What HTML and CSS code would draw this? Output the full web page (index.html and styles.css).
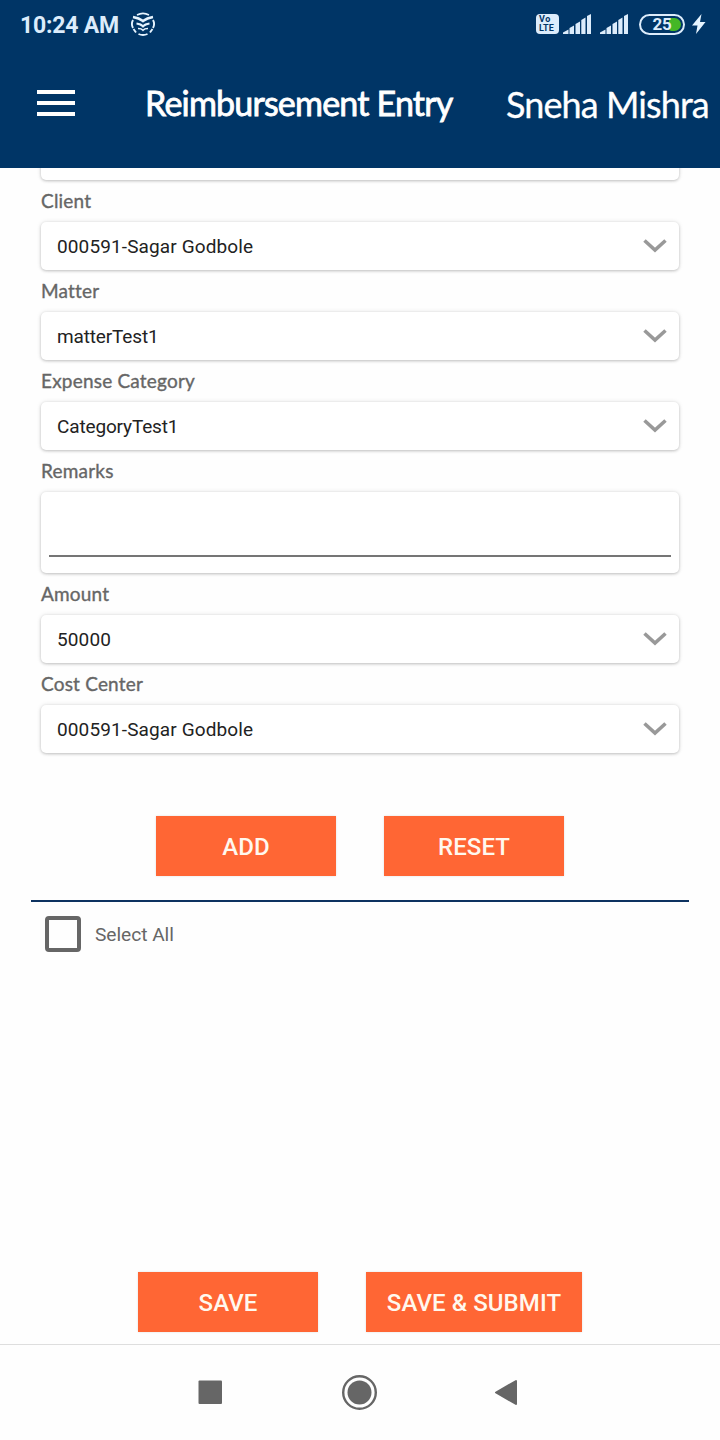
FILE: index.html
```html
<!DOCTYPE html>
<html lang="en">
<head>
<meta charset="utf-8">
<title>Reimbursement Entry</title>
<link rel="stylesheet" href="styles.css">
</head>
<body>
<div class="screen">
  <header class="header">
    <div class="status">
      <span class="clock">10:24 AM</span>
      <svg class="notif" width="26" height="26" viewBox="0 0 26 26" fill="none" stroke="#e6f4ff" stroke-width="1.9">
        <path d="M7 4Q13 .8 19 4" stroke-width="1.600"/>
        <path d="M3 6Q9 7 13 10Q17 7 23 6" stroke-width="2.600"/>
        <path d="M6.500 12.500Q11 13 13 15.500Q15 13 19.500 12.500" stroke-width="2"/>
        <path d="M8 17.500Q11.500 17.500 13 19.200Q14.500 17.500 18 17.500" stroke-width="1.600"/>
        <path d="M3 9Q.8 13 3 17M23 9Q25.200 13 23 17M3.500 18L6 21.500M22.500 18L20 21.500M8.500 23Q13 25 17.500 23"/>
      </svg>
      <div class="status-right">
        <div class="volte"><span class="vo">Vo</span><span>LTE</span></div>
        <svg class="signal" width="28" height="20" viewBox="0 0 28 20" fill="#dcecfb">
          <path d="M0 20V18.500L5.500 15.500V20ZM6.500 20V14L11 11.500V20ZM12.500 20V10L17 7.500V20ZM18.300 20V6L22.500 3.500V20ZM24 20V2L28 0V20Z"/>
        </svg>
        <svg class="signal second" width="28" height="20" viewBox="0 0 28 20" fill="#dcecfb">
          <path d="M0 20V18.500L5.500 15.500V20ZM6.500 20V14L11 11.500V20ZM12.500 20V10L17 7.500V20ZM18.300 20V6L22.500 3.500V20ZM24 20V2L28 0V20Z"/>
        </svg>
        <div class="battery"><span class="charge"></span><span class="level">25</span></div>
        <svg class="bolt" width="14" height="20" viewBox="0 0 14 20" fill="#e6f4ff"><path d="M9.500 0L0 11.500H5.500L4 20L13.500 8H8Z"/></svg>
      </div>
    </div>
    <div class="appbar">
      <div class="menu"><i></i><i></i><i></i></div>
      <h1 class="title">Reimbursement Entry</h1>
      <div class="user">Sneha Mishra</div>
    </div>
  </header>

  <main class="form">
    <div class="box clipped"></div>
    <label class="label">Client</label>
    <div class="box"><span>000591-Sagar Godbole</span><svg class="chev" width="24" height="16" viewBox="0 0 24 16"><path d="M1.500 2.500L12 12L22.500 2.500"/></svg></div>
    <label class="label">Matter</label>
    <div class="box"><span class="tight">matterTest1</span><svg class="chev" width="24" height="16" viewBox="0 0 24 16"><path d="M1.500 2.500L12 12L22.500 2.500"/></svg></div>
    <label class="label">Expense Category</label>
    <div class="box"><span class="tight">CategoryTest1</span><svg class="chev" width="24" height="16" viewBox="0 0 24 16"><path d="M1.500 2.500L12 12L22.500 2.500"/></svg></div>
    <label class="label">Remarks</label>
    <div class="box remarks"><div class="underline"></div></div>
    <label class="label">Amount</label>
    <div class="box"><span>50000</span><svg class="chev" width="24" height="16" viewBox="0 0 24 16"><path d="M1.500 2.500L12 12L22.500 2.500"/></svg></div>
    <label class="label">Cost Center</label>
    <div class="box"><span>000591-Sagar Godbole</span><svg class="chev" width="24" height="16" viewBox="0 0 24 16"><path d="M1.500 2.500L12 12L22.500 2.500"/></svg></div>
  </main>

  <div class="actions">
    <div class="btn">ADD</div>
    <div class="btn">RESET</div>
  </div>
  <div class="rule"></div>
  <div class="select"><div class="check"></div><span>Select All</span></div>

  <div class="actions bottom">
    <div class="btn">SAVE</div>
    <div class="btn wide">SAVE &amp; SUBMIT</div>
  </div>
  <nav class="nav">
    <svg width="24" height="24" viewBox="0 0 24 24" fill="#666"><rect x=".5" y=".5" width="23.500" height="23.500" rx="1"/></svg>
    <svg width="36" height="36" viewBox="0 0 36 36"><circle cx="18.500" cy="18.500" r="16.300" fill="none" stroke="#666" stroke-width="2.400"/><circle cx="18.500" cy="18.500" r="12" fill="#666"/></svg>
    <svg width="24" height="28" viewBox="0 0 24 28" fill="#666" stroke="#666" stroke-width="2" stroke-linejoin="round"><path d="M2 14.500L22 3V26Z"/></svg>
  </nav>
</div>
</body>
</html>
```
FILE: styles.css
```css
* { box-sizing: border-box; }
body { margin: 0; background: #fff; font-family: Roboto, sans-serif; }
.screen { width: 720px; height: 1440px; display: flex; flex-direction: column; overflow: hidden; background: #fefefe; }

.header { height: 168px; flex: none; background: #003566; color: #fff; z-index: 1; }
.status { height: 48px; display: flex; align-items: center; padding: 0 14px 0 20px; }
.clock { font-size: 23px; font-weight: 700; line-height: 28px; color: #dcecfb; letter-spacing: -.2px; padding-top: 3px; }
.notif { margin-left: 11px; }
.status-right { margin-left: auto; display: flex; align-items: center; }
.volte { width: 23px; height: 20px; border-radius: 4px; background: #dcecfb; color: #003566; display: flex; flex-direction: column; padding: 1px 0 0 3px; font: 700 9px/9px Roboto, sans-serif; letter-spacing: .2px; }
.vo { letter-spacing: .6px; }
.signal { margin-left: 4px; }
.signal.second { margin-left: 9px; }
.battery { position: relative; width: 46px; height: 21px; margin-left: 11px; border: 2px solid #dcecfb; border-radius: 11px; display: flex; align-items: center; justify-content: center; }
.charge { position: absolute; right: 2px; top: 2px; width: 12px; height: 13px; border-radius: 3px 7px 7px 3px; background: #45b726; }
.level { position: relative; font-size: 17px; font-weight: 700; line-height: 18px; color: #dcecfb; letter-spacing: -.3px; }
.bolt { margin-left: 7px; }

.appbar { display: flex; align-items: center; height: 110px; padding-left: 37px; }
.menu { display: flex; flex-direction: column; gap: 7px; width: 38px; }
.menu i { height: 4px; background: #fff; }
.title { margin: 0 0 0 70px; width: 361px; font: 400 34px/44px Lato, sans-serif; letter-spacing: -.8px; white-space: nowrap; -webkit-text-stroke: .8px #fff; }
.user { font: 400 36px/44px Lato, sans-serif; letter-spacing: -.9px; white-space: nowrap; -webkit-text-stroke: .3px #fff; padding-top: 1px; }

.form { padding: 0 41px; display: flex; flex-direction: column; }
.label { height: 42px; line-height: 42px; font-family: Lato, sans-serif; font-size: 19px; letter-spacing: .2px; color: #666; -webkit-text-stroke: .35px #666; }
.box { height: 48px; flex: none; display: flex; align-items: center; justify-content: space-between; padding: 0 12px 0 16px; background: #fff; border-radius: 5px; box-shadow: 0 1px 3px rgba(0,0,0,.2), 0 0 5px rgba(0,0,0,.1); font-size: 19px; letter-spacing: .12px; color: #222; }
.tight { letter-spacing: -.15px; }
.clipped { margin-top: -36px; }
.remarks { height: 81px; padding: 0 8px; align-items: flex-end; }
.underline { flex: 1; height: 2px; margin-bottom: 16px; background: #757575; }
.chev { fill: none; stroke: #999; stroke-width: 3.6; }

.actions { display: flex; justify-content: center; gap: 48px; margin-top: 63px; }
.btn { width: 180px; height: 60px; display: flex; align-items: center; justify-content: center; padding-top: 2px; background: #ff6634; color: #fff8ee; font-size: 24px; font-weight: 500; letter-spacing: .08px; white-space: nowrap; box-shadow: 0 0 2px rgba(0,0,0,.12); }
.btn.wide { width: 216px; }
.rule { height: 2px; margin: 24px 31px 0; background: #0d3260; flex: none; }
.select { display: flex; align-items: center; gap: 14px; margin: 14px 0 0 45px; font-size: 19.2px; color: #666; }
.select span { padding-top: 1px; letter-spacing: -.05px; }
.check { width: 36px; height: 36px; border: 4px solid #666; border-radius: 4px; }
.bottom { margin-top: auto; }
.nav { height: 96px; margin-top: 12px; flex: none; border-top: 1px solid #dedede; display: flex; align-items: center; justify-content: center; gap: 119px; padding: 0 5px 2px 0; }
.nav svg { overflow: visible; }
.nav svg:last-child { margin-left: -2px; }
```
